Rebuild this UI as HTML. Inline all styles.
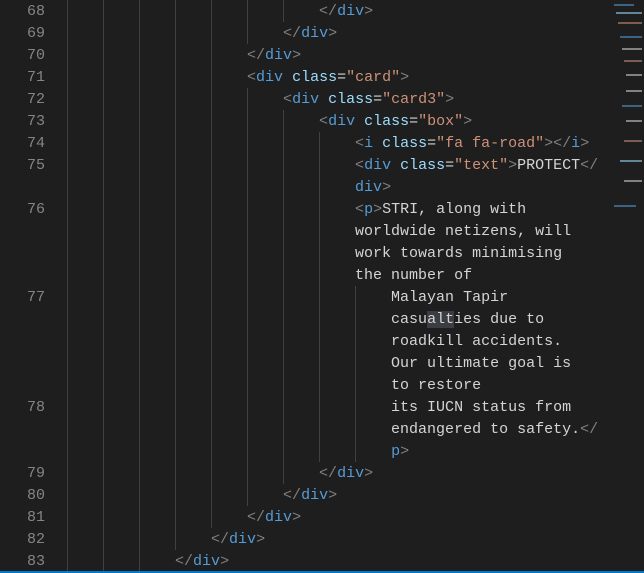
<!DOCTYPE html>
<html><head><meta charset="utf-8"><style>
html,body{margin:0;padding:0;background:#1e1e1e;width:644px;height:573px;overflow:hidden;position:relative}
.r{position:absolute;left:0;height:22px;width:644px}
.n{position:absolute;left:0;top:1px;width:45px;text-align:right;color:#858585;font:15px/22px "Liberation Mono",monospace}
.g{position:absolute;left:67px;top:0;height:22px;background:repeating-linear-gradient(to right,#404040 0 1px,transparent 1px 36px)}
.c{position:absolute;left:67px;top:1px;white-space:pre;color:#d4d4d4;font:15px/22px "Liberation Mono",monospace}
.p{color:#808080}.t{color:#569cd6}.a{color:#9cdcfe}.s{color:#ce9178}
.hl{background:#3a3d41}
.mm{position:absolute;height:2px}
</style></head><body>
<div class="r" style="top:0"><span class="n">68</span><div class="g" style="width:252px"></div><span class="c">                            <span class="p">&lt;/</span><span class="t">div</span><span class="p">&gt;</span></span></div>
<div class="r" style="top:22px"><span class="n">69</span><div class="g" style="width:216px"></div><span class="c">                        <span class="p">&lt;/</span><span class="t">div</span><span class="p">&gt;</span></span></div>
<div class="r" style="top:44px"><span class="n">70</span><div class="g" style="width:180px"></div><span class="c">                    <span class="p">&lt;/</span><span class="t">div</span><span class="p">&gt;</span></span></div>
<div class="r" style="top:66px"><span class="n">71</span><div class="g" style="width:180px"></div><span class="c">                    <span class="p">&lt;</span><span class="t">div</span> <span class="a">class</span>=<span class="s">"card"</span><span class="p">&gt;</span></span></div>
<div class="r" style="top:88px"><span class="n">72</span><div class="g" style="width:216px"></div><span class="c">                        <span class="p">&lt;</span><span class="t">div</span> <span class="a">class</span>=<span class="s">"card3"</span><span class="p">&gt;</span></span></div>
<div class="r" style="top:110px"><span class="n">73</span><div class="g" style="width:252px"></div><span class="c">                            <span class="p">&lt;</span><span class="t">div</span> <span class="a">class</span>=<span class="s">"box"</span><span class="p">&gt;</span></span></div>
<div class="r" style="top:132px"><span class="n">74</span><div class="g" style="width:288px"></div><span class="c">                                <span class="p">&lt;</span><span class="t">i</span> <span class="a">class</span>=<span class="s">"fa fa-road"</span><span class="p">&gt;&lt;/</span><span class="t">i</span><span class="p">&gt;</span></span></div>
<div class="r" style="top:154px"><span class="n">75</span><div class="g" style="width:288px"></div><span class="c">                                <span class="p">&lt;</span><span class="t">div</span> <span class="a">class</span>=<span class="s">"text"</span><span class="p">&gt;</span>PROTECT<span class="p">&lt;/</span></span></div>
<div class="r" style="top:176px"><div class="g" style="width:288px"></div><span class="c">                                <span class="t">div</span><span class="p">&gt;</span></span></div>
<div class="r" style="top:198px"><span class="n">76</span><div class="g" style="width:288px"></div><span class="c">                                <span class="p">&lt;</span><span class="t">p</span><span class="p">&gt;</span>STRI, along with</span></div>
<div class="r" style="top:220px"><div class="g" style="width:288px"></div><span class="c">                                worldwide netizens, will</span></div>
<div class="r" style="top:242px"><div class="g" style="width:288px"></div><span class="c">                                work towards minimising</span></div>
<div class="r" style="top:264px"><div class="g" style="width:288px"></div><span class="c">                                the number of</span></div>
<div class="r" style="top:286px"><span class="n">77</span><div class="g" style="width:324px"></div><span class="c">                                    Malayan Tapir</span></div>
<div class="r" style="top:308px"><div class="g" style="width:324px"></div><span class="c">                                    casu<span class="hl">alt</span>ies due to</span></div>
<div class="r" style="top:330px"><div class="g" style="width:324px"></div><span class="c">                                    roadkill accidents.</span></div>
<div class="r" style="top:352px"><div class="g" style="width:324px"></div><span class="c">                                    Our ultimate goal is</span></div>
<div class="r" style="top:374px"><div class="g" style="width:324px"></div><span class="c">                                    to restore</span></div>
<div class="r" style="top:396px"><span class="n">78</span><div class="g" style="width:324px"></div><span class="c">                                    its IUCN status from</span></div>
<div class="r" style="top:418px"><div class="g" style="width:324px"></div><span class="c">                                    endangered to safety.<span class="p">&lt;/</span></span></div>
<div class="r" style="top:440px"><div class="g" style="width:324px"></div><span class="c">                                    <span class="t">p</span><span class="p">&gt;</span></span></div>
<div class="r" style="top:462px"><span class="n">79</span><div class="g" style="width:252px"></div><span class="c">                            <span class="p">&lt;/</span><span class="t">div</span><span class="p">&gt;</span></span></div>
<div class="r" style="top:484px"><span class="n">80</span><div class="g" style="width:216px"></div><span class="c">                        <span class="p">&lt;/</span><span class="t">div</span><span class="p">&gt;</span></span></div>
<div class="r" style="top:506px"><span class="n">81</span><div class="g" style="width:180px"></div><span class="c">                    <span class="p">&lt;/</span><span class="t">div</span><span class="p">&gt;</span></span></div>
<div class="r" style="top:528px"><span class="n">82</span><div class="g" style="width:144px"></div><span class="c">                <span class="p">&lt;/</span><span class="t">div</span><span class="p">&gt;</span></span></div>
<div class="r" style="top:550px"><span class="n">83</span><div class="g" style="width:108px"></div><span class="c">            <span class="p">&lt;/</span><span class="t">div</span><span class="p">&gt;</span></span></div>
<div style="position:absolute;left:606px;top:0;width:38px;height:215px;opacity:.55">
<div class="mm" style="left:8px;top:4px;width:20px;background:#569cd6"></div>
<div class="mm" style="left:10px;top:12px;width:26px;background:#9cdcfe"></div>
<div class="mm" style="left:12px;top:22px;width:24px;background:#ce9178"></div>
<div class="mm" style="left:14px;top:36px;width:22px;background:#569cd6"></div>
<div class="mm" style="left:16px;top:48px;width:20px;background:#d4d4d4"></div>
<div class="mm" style="left:18px;top:60px;width:18px;background:#ce9178"></div>
<div class="mm" style="left:20px;top:74px;width:16px;background:#d4d4d4"></div>
<div class="mm" style="left:20px;top:90px;width:16px;background:#d4d4d4"></div>
<div class="mm" style="left:16px;top:105px;width:20px;background:#569cd6"></div>
<div class="mm" style="left:20px;top:120px;width:16px;background:#d4d4d4"></div>
<div class="mm" style="left:18px;top:140px;width:18px;background:#ce9178"></div>
<div class="mm" style="left:14px;top:160px;width:22px;background:#9cdcfe"></div>
<div class="mm" style="left:18px;top:180px;width:18px;background:#d4d4d4"></div>
<div class="mm" style="left:8px;top:205px;width:22px;background:#569cd6"></div>
</div>
<div style="position:absolute;left:0;top:571px;width:644px;height:2px;background:#007acc"></div>
</body></html>
